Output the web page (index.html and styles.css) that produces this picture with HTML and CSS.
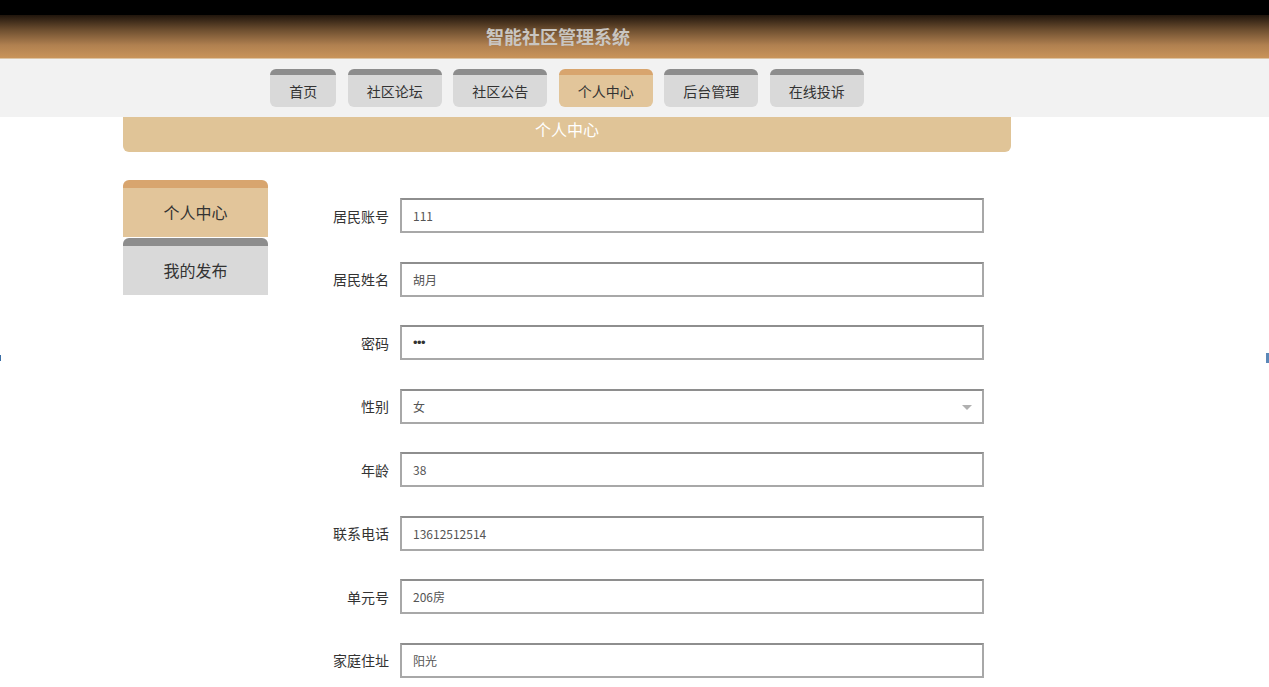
FILE: index.html
```html
<!DOCTYPE html>
<html lang="zh-CN">
<head>
<meta charset="utf-8">
<title>智能社区管理系统</title>
<link rel="stylesheet" href="styles.css">
</head>
<body>
<div class="topbar"></div>
<header class="header">
  <div class="inner header-inner">
    <h1 class="site-title">智能社区管理系统</h1>
  </div>
</header>
<nav class="nav">
  <div class="inner tabs">
    <a class="tab">首页</a>
    <a class="tab">社区论坛</a>
    <a class="tab">社区公告</a>
    <a class="tab active">个人中心</a>
    <a class="tab">后台管理</a>
    <a class="tab">在线投诉</a>
  </div>
</nav>
<main class="inner">
  <div class="title-bar">个人中心</div>
  <div class="content">
    <aside class="sidebar">
      <a class="side-item active">个人中心</a>
      <a class="side-item">我的发布</a>
    </aside>
    <form class="form">
      <div class="row"><label class="label">居民账号</label><div class="field">111</div></div>
      <div class="row"><label class="label">居民姓名</label><div class="field">胡月</div></div>
      <div class="row"><label class="label">密码</label><div class="field pwd">•••</div></div>
      <div class="row"><label class="label">性别</label><div class="field select">女<span class="arrow"></span></div></div>
      <div class="row"><label class="label">年龄</label><div class="field">38</div></div>
      <div class="row"><label class="label">联系电话</label><div class="field">13612512514</div></div>
      <div class="row"><label class="label">单元号</label><div class="field">206房</div></div>
      <div class="row"><label class="label">家庭住址</label><div class="field">阳光</div></div>
    </form>
  </div>
</main>
<span class="edge edge-left"></span>
<span class="edge edge-right"></span>
</body>
</html>
```
FILE: styles.css
```css
* { box-sizing: border-box; }
html, body { margin: 0; padding: 0; }
body {
  font-family: "Noto Sans CJK SC", "Noto Sans", "Liberation Sans", sans-serif;
  background: #fff;
  color: #333;
  width: 1269px;
  height: 687px;
  overflow: hidden;
}
.inner {
  width: 888px;
  margin-left: 123px;
}
.topbar { height: 15px; background: #000; }
.header {
  height: 44px;
  background: linear-gradient(to bottom, #20150c 0%, #6e4f30 35%, #b08050 70%, #c99459 100%);
  border-bottom: 1px solid #dcc4a4;
}
.header-inner {
  display: flex;
  justify-content: center;
}
.site-title {
  margin: 0 0 0 -18px;
  font-size: 18px;
  font-weight: bold;
  color: #c9c6c2;
  line-height: 43px;
}
.nav {
  height: 58px;
  background: #f2f2f2;
  padding-top: 10px;
}
.tabs {
  display: flex;
  justify-content: center;
  gap: 11.5px;
}
.tab {
  display: block;
  height: 38px;
  padding: 0 19px;
  background: #d9d9d9;
  border-top: 6px solid #8d8d8d;
  border-radius: 6px;
  font-size: 14px;
  line-height: 32px;
  color: #333;
}
.tab.active { background: #e2c59a; border-top-color: #d8a56e; }
.title-bar {
  height: 35px;
  background: #e0c497;
  border-radius: 0 0 6px 6px;
  color: #fff;
  text-align: center;
  font-size: 16px;
  line-height: 24px;
}
.content {
  display: flex;
  margin-top: 28px;
}
.sidebar {
  width: 145px;
  flex: none;
  display: flex;
  flex-direction: column;
  gap: 1px;
}
.side-item {
  display: block;
  height: 57px;
  background: #d9d9d9;
  border-top: 8px solid #8d8d8d;
  border-radius: 6px 6px 0 0;
  text-align: center;
  font-size: 16px;
  line-height: 48px;
  color: #333;
}
.side-item.active { background: #e2c59a; border-top-color: #d8a56e; }
.form {
  margin-left: 31px;
  padding-top: 18px;
  display: flex;
  flex-direction: column;
  gap: 28.5px;
}
.row {
  display: flex;
  align-items: center;
}
.label {
  width: 90px;
  text-align: right;
  font-size: 14px;
  color: #333;
}
.field {
  position: relative;
  margin-left: 11px;
  width: 584px;
  height: 35px;
  border: 2px solid #a8a8a8;
  border-top-color: #8e8e8e;
  padding-left: 11px;
  font-size: 12px;
  line-height: 31px;
  color: #555;
  background: #fff;
}
.field.pwd {
  font-family: "Liberation Sans", sans-serif;
  font-size: 13px;
  color: #333;
  letter-spacing: -0.5px;
}
.arrow {
  position: absolute;
  right: 10px;
  top: 14px;
  width: 0;
  height: 0;
  border-left: 5px solid transparent;
  border-right: 5px solid transparent;
  border-top: 5px solid #b0b0b0;
}
.edge {
  position: fixed;
  background: #3a6ea5;
}
.edge-left { left: 0; top: 355px; width: 1px; height: 6px; }
.edge-right { right: 0; top: 353px; width: 3px; height: 10px; background: #5b88b8; }
```
